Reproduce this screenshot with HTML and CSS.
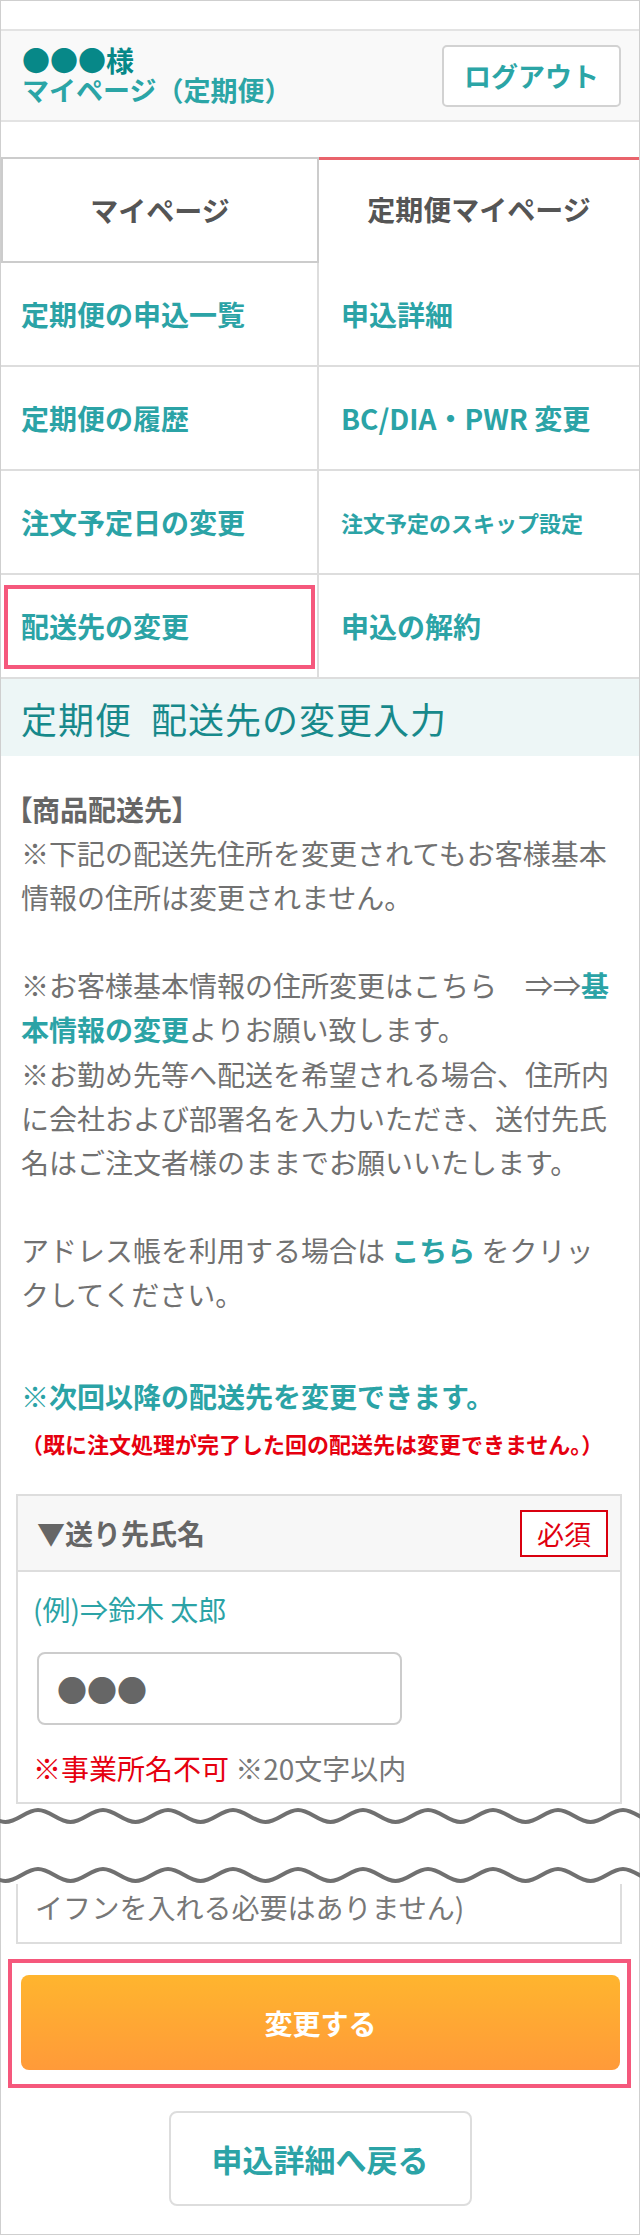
FILE: index.html
```html
<!DOCTYPE html>
<html lang="ja">
<head>
<meta charset="utf-8">
<title>定期便 配送先の変更入力</title>
<link rel="stylesheet" href="styles.css">
</head>
<body>
<div class="page">
  <header class="header">
    <div class="user">
      <div class="user-name">●●●様</div>
      <div class="user-page">マイページ（定期便）</div>
    </div>
    <button class="logout">ログアウト</button>
  </header>

  <nav class="tabs">
    <div class="tab tab-off">マイページ</div>
    <div class="tab tab-on">定期便マイページ</div>
  </nav>

  <div class="menu">
    <div class="menu-cell">定期便の申込一覧</div>
    <div class="menu-cell">申込詳細</div>
    <div class="menu-cell">定期便の履歴</div>
    <div class="menu-cell">BC/DIA・PWR 変更</div>
    <div class="menu-cell">注文予定日の変更</div>
    <div class="menu-cell small">注文予定のスキップ設定</div>
    <div class="menu-cell current">配送先の変更<span class="highlight"></span></div>
    <div class="menu-cell">申込の解約</div>
  </div>

  <h1 class="title">定期便&ensp;配送先の変更入力</h1>

  <section class="content">
    <p class="lead">【商品配送先】</p>
    <p class="text">※下記の配送先住所を変更されてもお客様基本<br>情報の住所は変更されません。</p>
    <p class="text blank">&nbsp;</p>
    <p class="text">※お客様基本情報の住所変更はこちら　⇒⇒<a class="link">基</a><br><a class="link">本情報の変更</a>よりお願い致します。</p>
    <p class="text">※お勤め先等へ配送を希望される場合、住所内<br>に会社および部署名を入力いただき、送付先氏<br>名はご注文者様のままでお願いいたします。</p>
    <p class="text blank">&nbsp;</p>
    <p class="text">アドレス帳を利用する場合は <a class="link">こちら</a> をクリッ<br>クしてください。</p>
    <p class="notice">※次回以降の配送先を変更できます。</p>
    <p class="warn">（既に注文処理が完了した回の配送先は変更できません。）</p>
  </section>

  <div class="form-box">
    <div class="form-head">
      <span class="form-label">▼送り先氏名</span>
      <span class="required">必須</span>
    </div>
    <div class="form-body">
      <p class="example">(例)⇒鈴木 太郎</p>
      <input class="field" type="text" value="●●●">
      <p class="hint"><span class="hint-red">※事業所名不可</span> ※20文字以内</p>
    </div>
  </div>

  <div class="cut">
    <svg class="wave" viewBox="0 0 640 16" width="640" height="16" aria-hidden="true">
      <path d="M -27 2 c 12 0 20.5 12 32.5 12 s 20.5 -12 32.5 -12 s 20.5 12 32.5 12 s 20.5 -12 32.5 -12 s 20.5 12 32.5 12 s 20.5 -12 32.5 -12 s 20.5 12 32.5 12 s 20.5 -12 32.5 -12 s 20.5 12 32.5 12 s 20.5 -12 32.5 -12 s 20.5 12 32.5 12 s 20.5 -12 32.5 -12 s 20.5 12 32.5 12 s 20.5 -12 32.5 -12 s 20.5 12 32.5 12 s 20.5 -12 32.5 -12 s 20.5 12 32.5 12 s 20.5 -12 32.5 -12 s 20.5 12 32.5 12 s 20.5 -12 32.5 -12 s 20.5 12 32.5 12 s 20.5 -12 32.5 -12"/>
    </svg>
    <svg class="wave wave-2" viewBox="0 0 640 16" width="640" height="16" aria-hidden="true">
      <path d="M -27 2 c 12 0 20.5 12 32.5 12 s 20.5 -12 32.5 -12 s 20.5 12 32.5 12 s 20.5 -12 32.5 -12 s 20.5 12 32.5 12 s 20.5 -12 32.5 -12 s 20.5 12 32.5 12 s 20.5 -12 32.5 -12 s 20.5 12 32.5 12 s 20.5 -12 32.5 -12 s 20.5 12 32.5 12 s 20.5 -12 32.5 -12 s 20.5 12 32.5 12 s 20.5 -12 32.5 -12 s 20.5 12 32.5 12 s 20.5 -12 32.5 -12 s 20.5 12 32.5 12 s 20.5 -12 32.5 -12 s 20.5 12 32.5 12 s 20.5 -12 32.5 -12 s 20.5 12 32.5 12 s 20.5 -12 32.5 -12"/>
    </svg>
  </div>

  <div class="form-box form-cont">
    <p class="cont-text">イフンを入れる必要はありません)</p>
  </div>

  <div class="submit-wrap">
    <button class="submit">変更する</button>
  </div>

  <div class="back-row">
    <button class="back">申込詳細へ戻る</button>
  </div>
</div>
</body>
</html>
```

FILE: styles.css
```css
* {
  box-sizing: border-box;
}

html, body {
  margin: 0;
  padding: 0;
  background: #ffffff;
}

body {
  font-family: "Noto Sans CJK JP", "Noto Sans", sans-serif;
  color: #707070;
}

p, h1 {
  margin: 0;
}

.page {
  width: 640px;
  min-height: 2235px;
  border: 1px solid #cfcfcf;
  padding-top: 28px;
}

/* header */
.header {
  height: 93px;
  border-top: 2px solid #e3e3e3;
  border-bottom: 2px solid #e3e3e3;
  background: #f9f9f9;
  display: flex;
  align-items: center;
  justify-content: space-between;
  padding: 0 18px 0 21px;
  margin-bottom: 35px;
}

.user {
  display: flex;
  flex-direction: column;
  font-weight: 700;
}

.user-name {
  font-size: 28px;
  line-height: 29px;
  color: #078888;
}

.user-page {
  font-size: 27px;
  line-height: 30px;
  color: #2ba5a6;
}

.logout {
  width: 179px;
  height: 62px;
  border: 2px solid #d2d2d2;
  border-radius: 5px;
  background: #ffffff;
  font-family: inherit;
  font-size: 27px;
  font-weight: 700;
  color: #2ba5a6;
  padding: 0;
}

/* tabs */
.tabs {
  display: grid;
  grid-template-columns: 318px 1fr;
}

.tab {
  height: 106px;
  display: flex;
  align-items: center;
  justify-content: center;
  font-size: 28px;
  font-weight: 700;
  color: #555555;
}

.tab-off {
  border: 2px solid #cccccc;
}

.tab-on {
  border-top: 3px solid #e9636b;
  padding-bottom: 6px;
}

/* menu */
.menu {
  display: grid;
  grid-template-columns: 318px 1fr;
}

.menu-cell {
  position: relative;
  height: 104px;
  border-bottom: 2px solid #dddddd;
  display: flex;
  align-items: center;
  padding-left: 22px;
  font-size: 28px;
  font-weight: 700;
  color: #2ba3a6;
}

.menu-cell:nth-child(odd) {
  border-right: 2px solid #dddddd;
  padding-left: 20px;
}

.menu-cell.small {
  font-size: 22px;
}

.highlight {
  position: absolute;
  left: 3px;
  top: 10px;
  width: 311px;
  bottom: 8px;
  border: 4px solid #f5587c;
}

/* title */
.title {
  height: 77px;
  background: #edf6f6;
  display: flex;
  align-items: center;
  padding-left: 20px;
  font-size: 36px;
  letter-spacing: 1px;
  font-weight: 400;
  color: #17898b;
}

/* content */
.content {
  padding: 31px 20px 0 20px;
  font-size: 28px;
  line-height: 44.1px;
}

.lead {
  font-weight: 700;
  color: #666666;
  font-feature-settings: "palt";
  margin-left: -3px;
}

.text {
  color: #717171;
}

.link {
  color: #2ba3a6;
  font-weight: 700;
  text-decoration: none;
}

.notice {
  margin-top: 58px;
  font-weight: 700;
  color: #2ba3a6;
}

.warn {
  margin-top: 7px;
  font-size: 22px;
  line-height: 36px;
  font-weight: 700;
  color: #e6000f;
}

/* form */
.form-box {
  margin: 33px 17px 0 15px;
  border: 2px solid #dddddd;
}

.form-head {
  height: 76px;
  background: #f7f7f7;
  border-bottom: 2px solid #dddddd;
  display: flex;
  align-items: center;
  justify-content: space-between;
  padding: 0 12px 0 19px;
}

.form-label {
  font-size: 28px;
  font-weight: 700;
  color: #666666;
}

.required {
  width: 88px;
  height: 47px;
  border: 2px solid #d9000f;
  background: #ffffff;
  display: flex;
  align-items: center;
  justify-content: center;
  font-size: 27px;
  color: #e0000f;
}

.form-body {
  padding: 17px 15px 14px 15px;
  font-size: 28px;
  line-height: 40px;
}

.example {
  color: #2ba3a6;
}

.field {
  display: block;
  width: 365px;
  height: 73px;
  margin: 23px 0 0 4px;
  border: 2px solid #cccccc;
  border-radius: 8px;
  padding: 0 18px;
  font-family: inherit;
  font-size: 30px;
  color: #666666;
  background: #ffffff;
  outline: none;
}

.hint {
  margin-top: 23px;
  color: #777777;
}

.hint-red {
  color: #e6000f;
}

/* cut marks */
.cut {
  padding: 4px 0 0 0;
  height: 80px;
  margin-left: -1px;
}

.wave {
  display: block;
  width: 640px;
  height: 16px;
  overflow: visible;
}

.wave path {
  fill: none;
  stroke: #707070;
  stroke-width: 4;
}

.wave-2 {
  margin-top: 43px;
}

.form-cont {
  margin-top: 0;
  border-top: none;
  padding: 3px 15px 15px 17px;
}

.cont-text {
  font-size: 28px;
  line-height: 40px;
  color: #777777;
}

/* submit */
.submit-wrap {
  margin: 15px 8px 0 7px;
  border: 4px solid #f5587c;
  padding: 12px 7px 14px 9px;
}

.submit {
  display: block;
  width: 100%;
  height: 95px;
  border: none;
  border-radius: 8px;
  background: linear-gradient(#ffb52e, #ff9a39);
  font-family: inherit;
  font-size: 28px;
  font-weight: 700;
  color: #ffffff;
}

.back-row {
  display: flex;
  justify-content: center;
  margin-top: 23px;
}

.back {
  width: 303px;
  height: 95px;
  border: 2px solid #dddddd;
  border-radius: 8px;
  background: #ffffff;
  font-family: inherit;
  font-size: 31px;
  font-weight: 700;
  color: #2ba3a6;
}
```
